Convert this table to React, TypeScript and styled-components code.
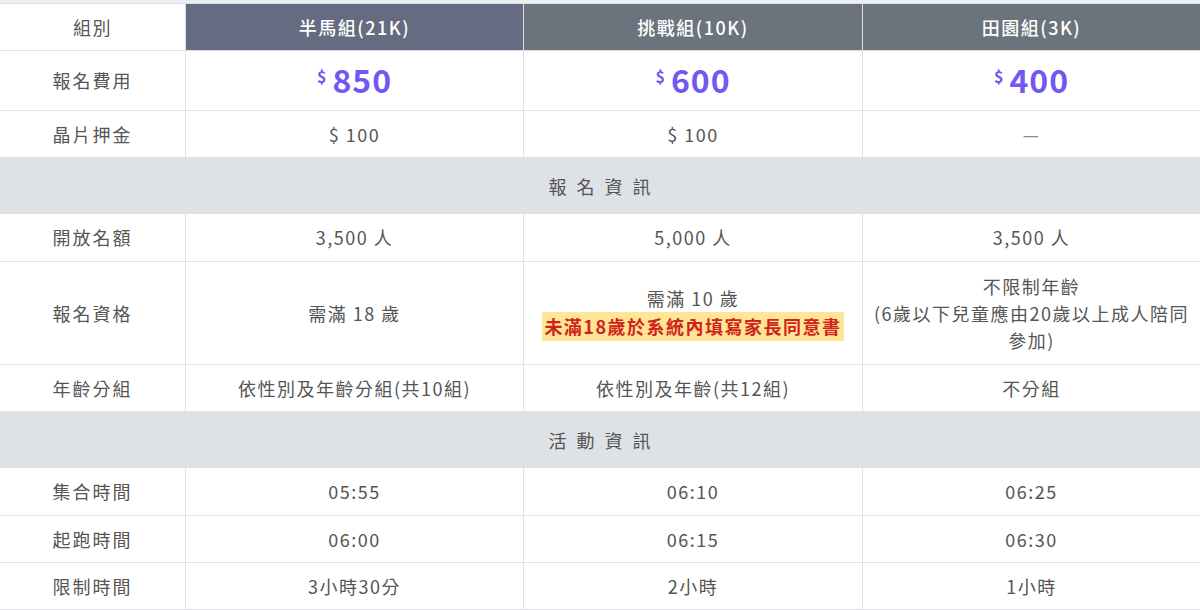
import React from "react";
import styled, { createGlobalStyle } from "styled-components";

const GlobalStyle = createGlobalStyle`
  body {
    margin: 0;
    background: #ffffff;
    font-family: "Noto Sans CJK TC", "Noto Sans", sans-serif;
  }
`;

const Wrapper = styled.div`
  width: 1200px;
  border-top: 3px solid #eceef1;
  overflow: hidden;
`;

const Table = styled.table`
  width: 1201px;
  border-collapse: collapse;
  table-layout: fixed;
  color: #555555;
  font-size: 18px;
  letter-spacing: 1.5px;
  margin-left: -1px;
`;

const Th = styled.th<{ $active?: boolean; $blank?: boolean }>`
  height: 46px;
  padding: 0 8px;
  font-weight: ${(p) => (p.$blank ? 400 : 500)};
  color: ${(p) => (p.$blank ? "#555555" : "#ffffff")};
  background: ${(p) =>
    p.$blank ? "#ffffff" : p.$active ? "#656b80" : "#6b737c"};
  border: 1px solid ${(p) => (p.$blank ? "#dee2e6" : "#d8dbe0")};
  border-top: 1px solid #dee2e6;
`;

const Td = styled.td<{ $h?: number }>`
  height: ${(p) => p.$h ?? 46}px;
  padding: 0 8px;
  text-align: center;
  vertical-align: middle;
  border: 1px solid #dee2e6;
  line-height: 27px;
  white-space: nowrap;
`;

const Label = styled(Td)`
  letter-spacing: 2px;
`;

const SectionCell = styled.td`
  height: 53px;
  background: #dee1e6;
  text-align: center;
  letter-spacing: 10px;
  padding-left: 10px;
  border: 1px solid #dee2e6;
`;

const Price = styled.span`
  color: #7257f2;
  font-weight: 700;
  font-size: 32px;
  letter-spacing: 1px;
  line-height: 1;

  sup {
    font-size: 16px;
    margin-right: 5px;
    vertical-align: 10px;
  }
`;

const Dash = styled.span`
  color: #8a8a8a;
`;

const Notice = styled.span`
  display: inline-block;
  background: #ffe594;
  color: #d1231e;
  font-weight: 700;
  padding: 1px 2px;
  line-height: 27px;
  letter-spacing: 1.5px;
`;

const groups = ["半馬組(21K)", "挑戰組(10K)", "田園組(3K)"];

const rows1: [string, string[]][] = [
  ["開放名額", ["3,500 人", "5,000 人", "3,500 人"]],
];

const rows2: [string, string[]][] = [
  ["集合時間", ["05:55", "06:10", "06:25"]],
  ["起跑時間", ["06:00", "06:15", "06:30"]],
  ["限制時間", ["3小時30分", "2小時", "1小時"]],
];

const App = () => {
  return (
    <Wrapper>
      <GlobalStyle />
      <Table>
        <colgroup>
          <col style={{ width: 186 }} />
          <col style={{ width: 338 }} />
          <col style={{ width: 339 }} />
          <col style={{ width: 338 }} />
        </colgroup>
        <thead>
          <tr>
            <Th $blank>組別</Th>
            {groups.map((g, i) => (
              <Th key={g} $active={i === 0}>
                {g}
              </Th>
            ))}
          </tr>
        </thead>
        <tbody>
          <tr>
            <Label $h={59}>報名費用</Label>
            {["850", "600", "400"].map((p) => (
              <Td key={p} $h={59}>
                <Price>
                  <sup>$</sup>
                  {p}
                </Price>
              </Td>
            ))}
          </tr>
          <tr>
            <Label>晶片押金</Label>
            <Td>$ 100</Td>
            <Td>$ 100</Td>
            <Td>
              <Dash>—</Dash>
            </Td>
          </tr>
          <tr>
            <SectionCell colSpan={4}>報名資訊</SectionCell>
          </tr>
          {rows1.map(([label, vals]) => (
            <tr key={label}>
              <Label $h={47}>{label}</Label>
              {vals.map((v, i) => (
                <Td key={i} $h={47}>
                  {v}
                </Td>
              ))}
            </tr>
          ))}
          <tr>
            <Label $h={102}>報名資格</Label>
            <Td $h={102}>需滿 18 歲</Td>
            <Td $h={102}>
              需滿 10 歲
              <br />
              <Notice>未滿18歲於系統內填寫家長同意書</Notice>
            </Td>
            <Td $h={102}>
              不限制年齡
              <br />
              (6歲以下兒童應由20歲以上成人陪同
              <br />
              參加)
            </Td>
          </tr>
          <tr>
            <Label>年齡分組</Label>
            <Td>依性別及年齡分組(共10組)</Td>
            <Td>依性別及年齡(共12組)</Td>
            <Td>不分組</Td>
          </tr>
          <tr>
            <SectionCell colSpan={4}>活動資訊</SectionCell>
          </tr>
          {rows2.map(([label, vals], r) => (
            <tr key={label}>
              <Label $h={r === 0 ? 47 : 46}>{label}</Label>
              {vals.map((v, i) => (
                <Td key={i} $h={r === 0 ? 47 : 46}>
                  {v}
                </Td>
              ))}
            </tr>
          ))}
        </tbody>
      </Table>
    </Wrapper>
  );
};

export default App;
